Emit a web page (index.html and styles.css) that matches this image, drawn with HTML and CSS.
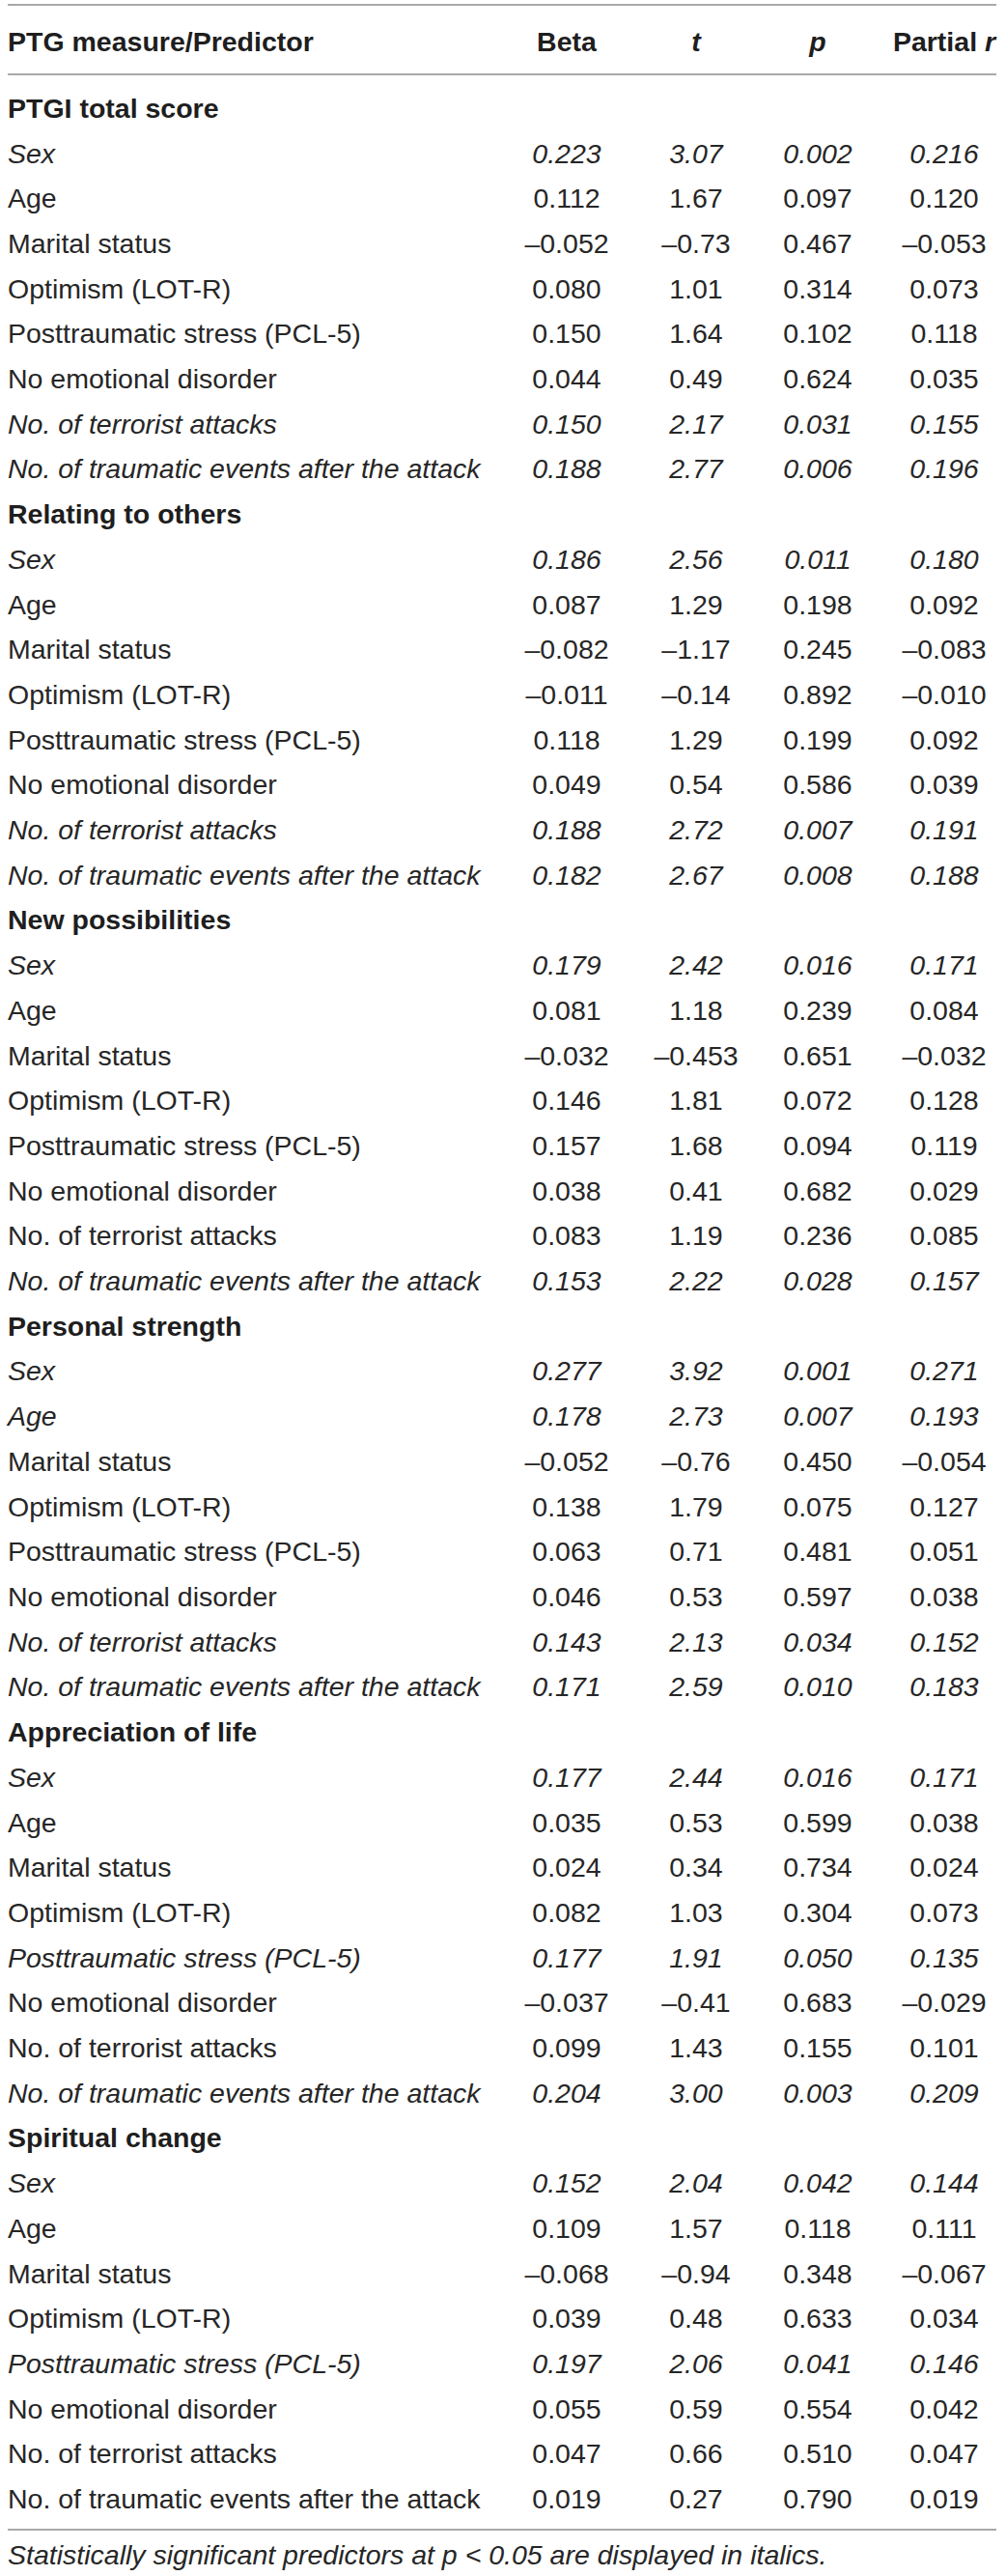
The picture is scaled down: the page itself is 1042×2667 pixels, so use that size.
FILE: index.html
```html
<!DOCTYPE html>
<html lang="en">
<head>
<meta charset="utf-8">
<title>PTG regression table</title>
<link rel="stylesheet" href="styles.css">
</head>
<body>
<div class="wrap">
<table class="tbl">
<colgroup>
<col class="c-label"><col class="c-beta"><col class="c-t"><col class="c-p"><col class="c-r">
</colgroup>
<thead>
<tr><th class="lab">PTG measure/Predictor</th><th>Beta</th><th><i>t</i></th><th><i>p</i></th><th>Partial <i>r</i></th></tr>
</thead>
<tbody>
<tr class="sec first"><td colspan="5">PTGI total score</td></tr>
<tr class="sig"><td>Sex</td><td>0.223</td><td>3.07</td><td>0.002</td><td>0.216</td></tr>
<tr><td>Age</td><td>0.112</td><td>1.67</td><td>0.097</td><td>0.120</td></tr>
<tr><td>Marital status</td><td>–0.052</td><td>–0.73</td><td>0.467</td><td>–0.053</td></tr>
<tr><td>Optimism (LOT-R)</td><td>0.080</td><td>1.01</td><td>0.314</td><td>0.073</td></tr>
<tr><td>Posttraumatic stress (PCL-5)</td><td>0.150</td><td>1.64</td><td>0.102</td><td>0.118</td></tr>
<tr><td>No emotional disorder</td><td>0.044</td><td>0.49</td><td>0.624</td><td>0.035</td></tr>
<tr class="sig"><td>No. of terrorist attacks</td><td>0.150</td><td>2.17</td><td>0.031</td><td>0.155</td></tr>
<tr class="sig"><td>No. of traumatic events after the attack</td><td>0.188</td><td>2.77</td><td>0.006</td><td>0.196</td></tr>

<tr class="sec"><td colspan="5">Relating to others</td></tr>
<tr class="sig"><td>Sex</td><td>0.186</td><td>2.56</td><td>0.011</td><td>0.180</td></tr>
<tr><td>Age</td><td>0.087</td><td>1.29</td><td>0.198</td><td>0.092</td></tr>
<tr><td>Marital status</td><td>–0.082</td><td>–1.17</td><td>0.245</td><td>–0.083</td></tr>
<tr><td>Optimism (LOT-R)</td><td>–0.011</td><td>–0.14</td><td>0.892</td><td>–0.010</td></tr>
<tr><td>Posttraumatic stress (PCL-5)</td><td>0.118</td><td>1.29</td><td>0.199</td><td>0.092</td></tr>
<tr><td>No emotional disorder</td><td>0.049</td><td>0.54</td><td>0.586</td><td>0.039</td></tr>
<tr class="sig"><td>No. of terrorist attacks</td><td>0.188</td><td>2.72</td><td>0.007</td><td>0.191</td></tr>
<tr class="sig"><td>No. of traumatic events after the attack</td><td>0.182</td><td>2.67</td><td>0.008</td><td>0.188</td></tr>

<tr class="sec"><td colspan="5">New possibilities</td></tr>
<tr class="sig"><td>Sex</td><td>0.179</td><td>2.42</td><td>0.016</td><td>0.171</td></tr>
<tr><td>Age</td><td>0.081</td><td>1.18</td><td>0.239</td><td>0.084</td></tr>
<tr><td>Marital status</td><td>–0.032</td><td>–0.453</td><td>0.651</td><td>–0.032</td></tr>
<tr><td>Optimism (LOT-R)</td><td>0.146</td><td>1.81</td><td>0.072</td><td>0.128</td></tr>
<tr><td>Posttraumatic stress (PCL-5)</td><td>0.157</td><td>1.68</td><td>0.094</td><td>0.119</td></tr>
<tr><td>No emotional disorder</td><td>0.038</td><td>0.41</td><td>0.682</td><td>0.029</td></tr>
<tr><td>No. of terrorist attacks</td><td>0.083</td><td>1.19</td><td>0.236</td><td>0.085</td></tr>
<tr class="sig"><td>No. of traumatic events after the attack</td><td>0.153</td><td>2.22</td><td>0.028</td><td>0.157</td></tr>

<tr class="sec"><td colspan="5">Personal strength</td></tr>
<tr class="sig"><td>Sex</td><td>0.277</td><td>3.92</td><td>0.001</td><td>0.271</td></tr>
<tr class="sig"><td>Age</td><td>0.178</td><td>2.73</td><td>0.007</td><td>0.193</td></tr>
<tr><td>Marital status</td><td>–0.052</td><td>–0.76</td><td>0.450</td><td>–0.054</td></tr>
<tr><td>Optimism (LOT-R)</td><td>0.138</td><td>1.79</td><td>0.075</td><td>0.127</td></tr>
<tr><td>Posttraumatic stress (PCL-5)</td><td>0.063</td><td>0.71</td><td>0.481</td><td>0.051</td></tr>
<tr><td>No emotional disorder</td><td>0.046</td><td>0.53</td><td>0.597</td><td>0.038</td></tr>
<tr class="sig"><td>No. of terrorist attacks</td><td>0.143</td><td>2.13</td><td>0.034</td><td>0.152</td></tr>
<tr class="sig"><td>No. of traumatic events after the attack</td><td>0.171</td><td>2.59</td><td>0.010</td><td>0.183</td></tr>

<tr class="sec"><td colspan="5">Appreciation of life</td></tr>
<tr class="sig"><td>Sex</td><td>0.177</td><td>2.44</td><td>0.016</td><td>0.171</td></tr>
<tr><td>Age</td><td>0.035</td><td>0.53</td><td>0.599</td><td>0.038</td></tr>
<tr><td>Marital status</td><td>0.024</td><td>0.34</td><td>0.734</td><td>0.024</td></tr>
<tr><td>Optimism (LOT-R)</td><td>0.082</td><td>1.03</td><td>0.304</td><td>0.073</td></tr>
<tr class="sig"><td>Posttraumatic stress (PCL-5)</td><td>0.177</td><td>1.91</td><td>0.050</td><td>0.135</td></tr>
<tr><td>No emotional disorder</td><td>–0.037</td><td>–0.41</td><td>0.683</td><td>–0.029</td></tr>
<tr><td>No. of terrorist attacks</td><td>0.099</td><td>1.43</td><td>0.155</td><td>0.101</td></tr>
<tr class="sig"><td>No. of traumatic events after the attack</td><td>0.204</td><td>3.00</td><td>0.003</td><td>0.209</td></tr>

<tr class="sec"><td colspan="5">Spiritual change</td></tr>
<tr class="sig"><td>Sex</td><td>0.152</td><td>2.04</td><td>0.042</td><td>0.144</td></tr>
<tr><td>Age</td><td>0.109</td><td>1.57</td><td>0.118</td><td>0.111</td></tr>
<tr><td>Marital status</td><td>–0.068</td><td>–0.94</td><td>0.348</td><td>–0.067</td></tr>
<tr><td>Optimism (LOT-R)</td><td>0.039</td><td>0.48</td><td>0.633</td><td>0.034</td></tr>
<tr class="sig"><td>Posttraumatic stress (PCL-5)</td><td>0.197</td><td>2.06</td><td>0.041</td><td>0.146</td></tr>
<tr><td>No emotional disorder</td><td>0.055</td><td>0.59</td><td>0.554</td><td>0.042</td></tr>
<tr><td>No. of terrorist attacks</td><td>0.047</td><td>0.66</td><td>0.510</td><td>0.047</td></tr>
<tr class="last"><td>No. of traumatic events after the attack</td><td>0.019</td><td>0.27</td><td>0.790</td><td>0.019</td></tr>
</tbody>
</table>
<p class="note">Statistically significant predictors at <span>p</span> &lt; 0.05 are displayed in italics.</p>
</div>
</body>
</html>
```
FILE: styles.css
```css
html, body {
  margin: 0;
  padding: 0;
  background: #ffffff;
}

.wrap {
  padding: 4px 10px 0 8px;
  font-family: "Liberation Sans", Arial, Helvetica, sans-serif;
  font-size: 28.5px;
  color: #262626;
}

.tbl {
  width: 1024px;
  table-layout: fixed;
  border-collapse: separate;
  border-spacing: 0;
  border-top: 2px solid #a9a9a9;
}

.c-label { width: 494px; }
.c-beta { width: 170px; }
.c-t { width: 98px; }
.c-p { width: 154px; }
.c-r { width: 108px; }

.tbl th {
  font-weight: 700;
  color: #1e1e1e;
  text-align: center;
  padding: 4px 0 0 0;
  line-height: 66px;
  border-bottom: 2px solid #a9a9a9;
  white-space: nowrap;
}

.tbl th.lab {
  text-align: left;
}

.tbl td {
  padding: 0;
  line-height: 46.7px;
  text-align: center;
  white-space: nowrap;
}

.tbl td:first-child {
  text-align: left;
}

.tbl tr.first td {
  padding-top: 10.8px;
}

.tbl tr.last td {
  padding-bottom: 7.5px;
  border-bottom: 2px solid #a9a9a9;
}

.tbl tr.sec td {
  font-weight: 700;
  color: #1e1e1e;
}

.tbl tr.sig td {
  font-style: italic;
}

.note {
  margin: 0;
  padding-top: 7px;
  line-height: 36px;
  font-style: italic;
}
```
